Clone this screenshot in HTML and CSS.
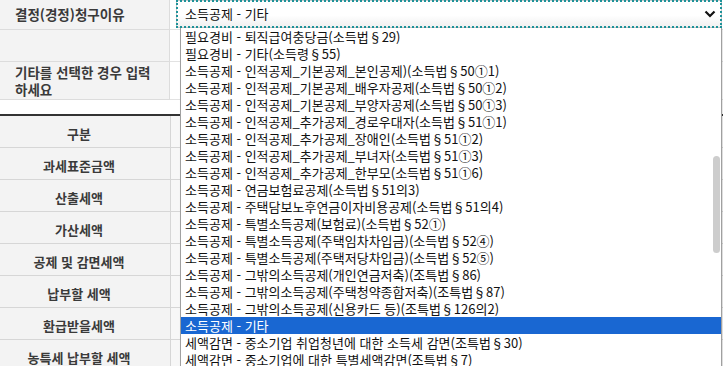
FILE: index.html
```html
<!DOCTYPE html>
<html lang="ko">
<head>
<meta charset="utf-8">
<link rel="stylesheet" href="styles.css">
</head>
<body>
<div class="page">
  <div class="form">
    <div class="lbl r1">결정(경정)청구이유</div>
    <div class="val r1">
      <div class="select">
        <span>소득공제 - 기타</span>
        <svg class="chev" width="12" height="8" viewBox="0 0 12 8"><polyline points="1.5,1.5 6,6 10.5,1.5" fill="none" stroke="#111" stroke-width="2.2"/></svg>
      </div>
    </div>
    <div class="lbl r2"></div>
    <div class="val r2"></div>
    <div class="lbl r3">기타를 선택한 경우 입력<br>하세요</div>
    <div class="val r3"></div>
  </div>
  <div class="gap"></div>
  <div class="summary">
    <div class="slbl">구분</div><div class="sval"></div>
    <div class="slbl">과세표준금액</div><div class="sval"></div>
    <div class="slbl">산출세액</div><div class="sval"></div>
    <div class="slbl">가산세액</div><div class="sval"></div>
    <div class="slbl">공제 및 감면세액</div><div class="sval"></div>
    <div class="slbl">납부할 세액</div><div class="sval"></div>
    <div class="slbl">환급받을세액</div><div class="sval"></div>
    <div class="slbl">농특세 납부할 세액</div><div class="sval"></div>
  </div>

  <div class="dropdown">
    <div class="opt">필요경비 - 퇴직급여충당금(소득법§29)</div>
    <div class="opt">필요경비 - 기타(소득령§55)</div>
    <div class="opt">소득공제 - 인적공제_기본공제_본인공제)(소득법§50①1)</div>
    <div class="opt">소득공제 - 인적공제_기본공제_배우자공제(소득법§50①2)</div>
    <div class="opt">소득공제 - 인적공제_기본공제_부양자공제(소득법§50①3)</div>
    <div class="opt">소득공제 - 인적공제_추가공제_경로우대자(소득법§51①1)</div>
    <div class="opt">소득공제 - 인적공제_추가공제_장애인(소득법§51①2)</div>
    <div class="opt">소득공제 - 인적공제_추가공제_부녀자(소득법§51①3)</div>
    <div class="opt">소득공제 - 인적공제_추가공제_한부모(소득법§51①6)</div>
    <div class="opt">소득공제 - 연금보험료공제(소득법§51의3)</div>
    <div class="opt">소득공제 - 주택담보노후연금이자비용공제(소득법§51의4)</div>
    <div class="opt">소득공제 - 특별소득공제(보험료)(소득법§52①)</div>
    <div class="opt">소득공제 - 특별소득공제(주택임차차입금)(소득법§52④)</div>
    <div class="opt">소득공제 - 특별소득공제(주택저당차입금)(소득법§52⑤)</div>
    <div class="opt">소득공제 - 그밖의소득공제(개인연금저축)(조특법§86)</div>
    <div class="opt">소득공제 - 그밖의소득공제(주택청약종합저축)(조특법§87)</div>
    <div class="opt">소득공제 - 그밖의소득공제(신용카드 등)(조특법§126의2)</div>
    <div class="opt selected">소득공제 - 기타</div>
    <div class="opt">세액감면 - 중소기업 취업청년에 대한 소득세 감면(조특법§30)</div>
    <div class="opt">세액감면 - 중소기업에 대한 특별세액감면(조특법§7)</div>
    <div class="thumb"></div>
  </div>
</div>
</body>
</html>
```

FILE: styles.css
```css
* { box-sizing: border-box; }
html, body { margin: 0; padding: 0; overflow: hidden; background: #fff; }
body {
  font-family: "Noto Sans CJK KR", "Noto Sans", sans-serif;
  color: #333;
  width: 723px;
  height: 366px;
}
.page { position: relative; width: 723px; height: 366px; overflow: hidden; }

.form {
  display: grid;
  grid-template-columns: 170px 1fr;
  grid-template-rows: 30px 32px 38px;
}
.lbl {
  background: #f3f3f3;
  border-bottom: 1px solid #dcdcdc;
  border-right: 1px solid #dcdcdc;
  font-size: 13.5px;
  font-weight: 700;
  color: #3a3a3a;
  line-height: 17px;
  padding-left: 15px;
  display: flex;
  align-items: center;
}
.val {
  border-bottom: 1px solid #e2e2e2;
  background: #fff;
  padding-left: 6px;
}
.select {
  height: 28px;
  margin-right: 1px;
  outline: 2px dotted #1e9299;
  outline-offset: -2px;
  background: linear-gradient(#ffffff, #ffffff 55%, #f0f0f0);
  border: 1px solid #c9c9c9;
  display: flex;
  align-items: center;
  justify-content: space-between;
  padding: 0 5px 1px 8px;
  font-size: 13px;
  color: #111;
}
.chev { margin-top: 1px; }

.gap { height: 16px; border-bottom: 2px solid #333; }

.summary {
  display: grid;
  grid-template-columns: 170px 1fr;
  grid-auto-rows: 32px;
}
.slbl {
  background: #f3f3f3;
  border-bottom: 1px solid #d6d6d6;
  font-size: 13px;
  font-weight: 700;
  color: #3a3a3a;
  padding: 3px 12px 0 0;
  display: flex;
  align-items: center;
  justify-content: center;
}
.sval {
  border-left: 1px solid #d6d6d6;
  border-bottom: 1px solid #d6d6d6;
  background: #f7f7f7;
}

.dropdown {
  position: absolute;
  left: 180px;
  top: 28px;
  width: 542px;
  height: 345px;
  background: #fff;
  border: 1px solid #a0a0a0;
  border-top: none;
  box-shadow: 1px 1px 2px rgba(0,0,0,0.15);
}
.opt {
  height: 17px;
  line-height: 17px;
  font-size: 13px;
  color: #111;
  padding-left: 4px;
  white-space: nowrap;
  overflow: hidden;
}
.opt.selected { background: #1967d2; color: #fff; }
.thumb {
  position: absolute;
  right: 1px;
  top: 128px;
  width: 7px;
  height: 97px;
  border-radius: 4px;
  background: #cdcdcd;
}
```
